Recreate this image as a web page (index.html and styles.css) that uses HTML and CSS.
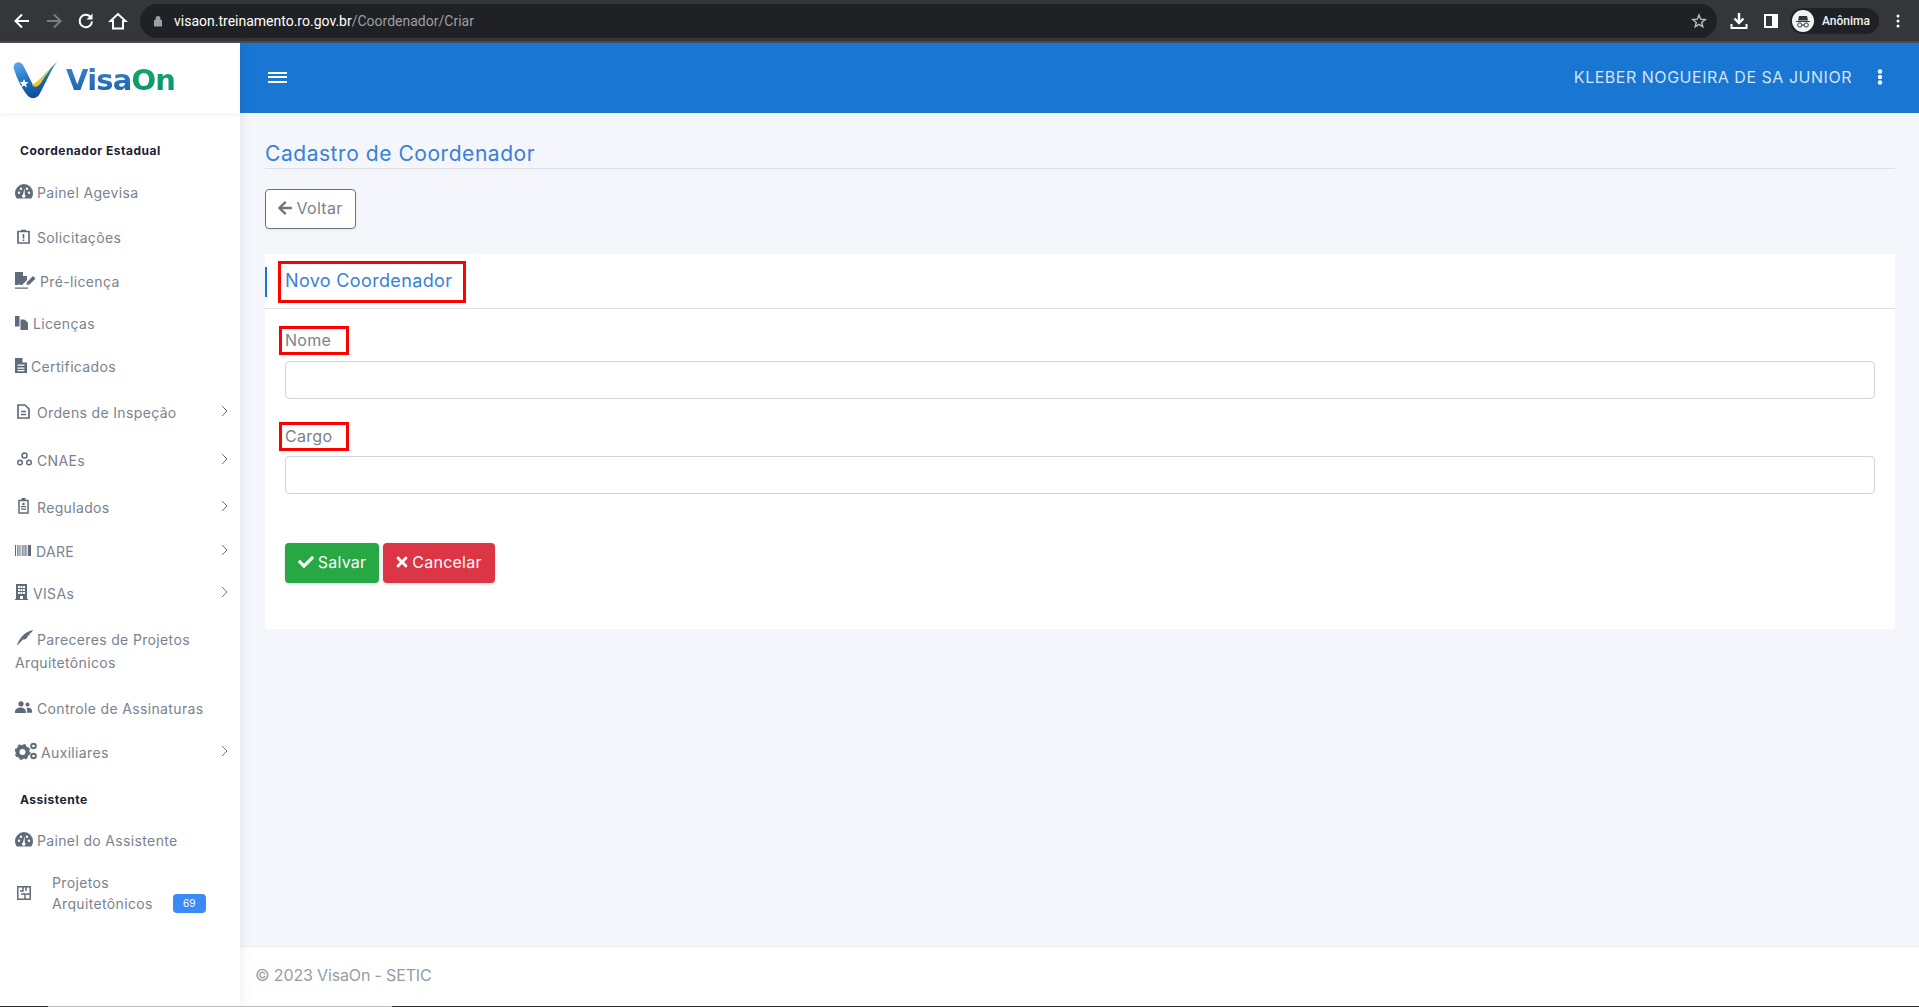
FILE: index.html
```html
<!DOCTYPE html>
<html lang="pt-BR">
<head>
<meta charset="utf-8">
<title>VisaOn</title>
<link rel="stylesheet" href="styles.css">
</head>
<body>
<div class="chrome">
  <svg class="cico" width="20" height="20" viewBox="0 0 20 20"><path d="M17 10H4M10 3.500 3.500 10l6.500 6.500" fill="none" stroke="#fff" stroke-width="2"/></svg>
  <svg class="cico" width="20" height="20" viewBox="0 0 20 20"><path d="M3 10h13M10 3.500l6.500 6.500-6.500 6.500" fill="none" stroke="#7b7c7f" stroke-width="2"/></svg>
  <svg class="cico" width="20" height="20" viewBox="0 0 20 20"><path d="M16 10.500A6.200 6.200 0 1 1 14.200 5.600" fill="none" stroke="#fff" stroke-width="2"/><path d="M16.500 2.500v6h-6z" fill="#fff"/></svg>
  <svg class="cico" width="20" height="20" viewBox="0 0 20 20"><path d="M10 3 2.500 10H5v7.500h10V10h2.500z" fill="none" stroke="#fff" stroke-width="2"/></svg>
  <div class="omni">
    <svg class="lock" width="10" height="12" viewBox="0 0 10 12"><path d="M2.500 5V3.400a2.500 2.500 0 0 1 5 0V5H9v6.500H1V5z" fill="#9aa0a6"/></svg>
    <span class="url">visaon.treinamento.ro.gov.br<span class="url-dim">/Coordenador/Criar</span></span>
    <svg class="star" width="16" height="16" viewBox="0 0 16 16"><path d="m8 2 1.700 4.200 4.500.3-3.500 2.900 1.100 4.400L8 11.400l-3.800 2.400 1.100-4.400-3.500-2.900 4.500-.3z" fill="none" stroke="#bdc1c6" stroke-width="1.400"/></svg>
  </div>
  <svg class="dl" width="18" height="18" viewBox="0 0 18 18"><path d="M9 1v9M4.500 6.500 9 11l4.500-4.500" fill="none" stroke="#fff" stroke-width="2.400"/><path d="M1.500 12v4h15v-4" fill="none" stroke="#fff" stroke-width="2"/></svg>
  <svg class="panel" width="14" height="14" viewBox="0 0 14 14"><path d="M0 0h14v14H0zM2 2v10h6V2z" fill="#fff" fill-rule="evenodd"/></svg>
  <div class="pill">
    <svg width="22" height="22" viewBox="0 0 22 22"><circle cx="11" cy="11" r="11" fill="#f1f3f4"/><path d="M4 11h14v1H4zM7 6h8l1 4.500H6z" fill="#35363a"/><circle cx="7.800" cy="15" r="2.100" fill="none" stroke="#35363a"/><circle cx="14.200" cy="15" r="2.100" fill="none" stroke="#35363a"/><path d="M9.800 15h2.400" stroke="#35363a"/></svg>
    <span>Anônima</span>
  </div>
  <svg class="cdots" width="4" height="14" viewBox="0 0 4 14"><circle cx="2" cy="2" r="1.500" fill="#fff"/><circle cx="2" cy="7" r="1.500" fill="#fff"/><circle cx="2" cy="12" r="1.500" fill="#fff"/></svg>
</div>

<div class="app">
  <aside class="sidebar">
    <div class="logo">
      <svg width="44" height="38" viewBox="0 0 44 38">
        <defs>
          <linearGradient id="vb" x1="0" y1="0" x2="0.5" y2="1"><stop offset="0" stop-color="#63aef0"/><stop offset="0.55" stop-color="#1f6fc0"/><stop offset="1" stop-color="#0d4a94"/></linearGradient>
          <linearGradient id="vy" x1="0" y1="1" x2="1" y2="0"><stop offset="0" stop-color="#f5c518"/><stop offset="0.7" stop-color="#d9d42c"/><stop offset="1" stop-color="#2fa36b"/></linearGradient>
        </defs>
        <path d="M1 8C-1 1 7-1 10 4l10 20c7-4 14-14 24-23-7 9-11 21-18 33-3 4-8 4-11 1C9 28 4 18 1 8z" fill="url(#vb)"/>
        <path d="M19 24c8-4 15-14 25-23-6 6-12 14-16 21-3 4-6 5-9 2z" fill="url(#vy)"/>
        <path d="m11 18 1.300 3 3.200.2-2.500 2 .9 3.200-2.900-1.800-2.800 1.800.8-3.200-2.500-2 3.300-.2z" fill="#fff"/>
      </svg>
      <span class="brand"><span class="brand-visa">Visa</span><span class="brand-on">On</span></span>
    </div>
    <nav class="nav">
      <div class="nav-head nav-head-first">Coordenador Estadual</div>
      <a class="mi h46"><span class="ico w22"><svg width="18" height="15" viewBox="0 0 18 15"><path d="M9 0a9 9 0 0 1 9 9c0 2-.6 4-1.700 5.500H1.700A9 9 0 0 1 0 9a9 9 0 0 1 9-9zM9.500 4 8 10.500a1.700 1.700 0 1 0 1.800.2zM4 7.500a1.200 1.200 0 1 0 0 2.400 1.200 1.200 0 0 0 0-2.400zm10 0a1.200 1.200 0 1 0 0 2.400 1.200 1.200 0 0 0 0-2.400zM6 3.500a1.200 1.200 0 1 0 0 2.400 1.200 1.200 0 0 0 0-2.400zm6 0a1.200 1.200 0 1 0 0 2.400 1.200 1.200 0 0 0 0-2.400z" fill="#5f6b7a" fill-rule="evenodd"/></svg></span>Painel Agevisa</a>
      <a class="mi h45"><span class="ico w22 pad2"><svg width="13" height="15" viewBox="0 0 13 15"><path d="M4 1.500h5M1 2.500h11v11.500H1z" fill="none" stroke="#5f6b7a" stroke-width="1.700"/><path d="M5.700 5h1.600v4.500H5.700zM5.700 10.500h1.600v1.500H5.700z" fill="#5f6b7a"/></svg></span>Solicitações</a>
      <a class="mi h43"><span class="ico w25"><svg width="21" height="17" viewBox="0 0 21 17"><path d="M0 0h8l4 4v4l-5 5H4l1.500-2-2.500 2H0zM8 0v4h4z" fill="#5f6b7a"/><path d="m12 10 6-6 2.500 2.500-6 6-3 .5zM0 15.500h13v1.300H0z" fill="#5f6b7a"/></svg></span>Pré-licença</a>
      <a class="mi h41"><span class="ico w18"><svg width="13" height="14" viewBox="0 0 13 14"><path d="M0 0h4.500v10.500H0zM5.500 3.500H9L13 7v7H5.500zM9.500 3.500 13 6.700H9.500z" fill="#5f6b7a"/></svg></span>Licenças</a>
      <a class="mi h44"><span class="ico w16"><svg width="12" height="15" viewBox="0 0 12 15"><path d="M0 0h7.500L12 4.500V15H0zM2.500 6.500v1.300h7V6.500zm0 3v1.300h7V9.500zm0 2.600v1.200h7v-1.200zM7.500 0v4.500H12z" fill="#5f6b7a" fill-rule="evenodd"/></svg></span>Certificados</a>
      <a class="mi h48"><span class="ico w22 pad2"><svg width="13" height="15" viewBox="0 0 13 15"><path d="M1 1h7l4 4v9H1z" fill="none" stroke="#5f6b7a" stroke-width="1.700"/><path d="M4 7.500h5M4 10.500h5" stroke="#5f6b7a" stroke-width="1.500"/></svg></span>Ordens de Inspeção<svg class="chev" width="7" height="12" viewBox="0 0 7 12"><path d="m1 1 5 5-5 5" fill="none" stroke="#6c757d"/></svg></a>
      <a class="mi h48"><span class="ico w22 pad2"><svg width="15" height="14" viewBox="0 0 15 14"><circle cx="7.500" cy="3.500" r="2.500" fill="none" stroke="#5f6b7a" stroke-width="1.500"/><circle cx="3" cy="10.500" r="2.300" fill="none" stroke="#5f6b7a" stroke-width="1.500"/><circle cx="12" cy="10.500" r="2.300" fill="none" stroke="#5f6b7a" stroke-width="1.500"/></svg></span>CNAEs<svg class="chev" width="7" height="12" viewBox="0 0 7 12"><path d="m1 1 5 5-5 5" fill="none" stroke="#6c757d"/></svg></a>
      <a class="mi h46"><span class="ico w22 pad3"><svg width="11" height="16" viewBox="0 0 11 16"><path d="M1 2.500h9V15H1z" fill="none" stroke="#5f6b7a" stroke-width="1.500"/><path d="M3.500 0h4v3h-4zM3 8h5v1.300H3zM3 10.500h5v1.300H3z" fill="#5f6b7a"/><circle cx="5.500" cy="6" r="1.300" fill="#5f6b7a"/></svg></span>Regulados<svg class="chev" width="7" height="12" viewBox="0 0 7 12"><path d="m1 1 5 5-5 5" fill="none" stroke="#6c757d"/></svg></a>
      <a class="mi h42"><span class="ico w21"><svg width="16" height="11" viewBox="0 0 16 11"><path d="M0 0h1v11H0zM2 0h.7v11H2zM3.500 0h1v11h-1zM5.500 0h.7v11h-.7zM7 0h.7v11H7zM8.500 0h1v11h-1zM10 0h.7v11H10zM11.500 0h.7v11h-.7zM13 0h3v11h-3z" fill="#5f6b7a"/></svg></span>DARE<svg class="chev" width="7" height="12" viewBox="0 0 7 12"><path d="m1 1 5 5-5 5" fill="none" stroke="#6c757d"/></svg></a>
      <a class="mi h42"><span class="ico w18"><svg width="13" height="16" viewBox="0 0 13 16"><path d="M1 0h11v15h1v1H0v-1h1zM3 2v2h2V2zm2.500 0v2h2V2zM8 2v2h2V2zM3 5v2h2V5zm2.500 0v2h2V5zM8 5v2h2V5zM3 8v2h2V8zm2.500 0v2h2V8zM8 8v2h2V8zM5 12v3h3v-3z" fill="#5f6b7a" fill-rule="evenodd"/></svg></span>VISAs<svg class="chev" width="7" height="12" viewBox="0 0 7 12"><path d="m1 1 5 5-5 5" fill="none" stroke="#6c757d"/></svg></a>
      <a class="mi-wrap"><span class="ico-in"><svg width="16" height="15" viewBox="0 0 16 15"><path d="M0 15C2 9 7 2 16 0c-1 2-2 3-4 4l1 .5-3 2 1 .5-3 2.500h-2L2 13.500 1 15z" fill="#5f6b7a"/></svg></span>Pareceres de Projetos Arquitetônicos</a>
      <a class="mi h46"><span class="ico w22"><svg width="17" height="12" viewBox="0 0 17 12"><circle cx="6" cy="2.800" r="2.600" fill="#5f6b7a"/><circle cx="12.500" cy="3.500" r="2" fill="#5f6b7a"/><path d="M0 11c0-6 11-6 11 0v1H0zM12 11.800h5V10c0-3-3-4-5.500-3 1 1.200.5 3 .5 4.800z" fill="#5f6b7a"/></svg></span>Controle de Assinaturas</a>
      <a class="mi h42"><span class="ico w26"><svg width="23" height="18" viewBox="0 0 23 18"><circle cx="7.500" cy="10" r="5" fill="none" stroke="#5f6b7a" stroke-width="4"/><circle cx="7.500" cy="10" r="6.500" fill="none" stroke="#5f6b7a" stroke-width="3" stroke-dasharray="2.500 2.600"/><circle cx="18.500" cy="4" r="2.300" fill="none" stroke="#5f6b7a" stroke-width="2"/><circle cx="18.500" cy="14" r="2.300" fill="none" stroke="#5f6b7a" stroke-width="2"/></svg></span>Auxiliares<svg class="chev" width="7" height="12" viewBox="0 0 7 12"><path d="m1 1 5 5-5 5" fill="none" stroke="#6c757d"/></svg></a>
      <div class="nav-head">Assistente</div>
      <a class="mi h42"><span class="ico w22"><svg width="18" height="15" viewBox="0 0 18 15"><path d="M9 0a9 9 0 0 1 9 9c0 2-.6 4-1.700 5.500H1.700A9 9 0 0 1 0 9a9 9 0 0 1 9-9zM9.500 4 8 10.500a1.700 1.700 0 1 0 1.800.2zM4 7.500a1.200 1.200 0 1 0 0 2.400 1.200 1.200 0 0 0 0-2.400zm10 0a1.200 1.200 0 1 0 0 2.400 1.200 1.200 0 0 0 0-2.400zM6 3.500a1.200 1.200 0 1 0 0 2.400 1.200 1.200 0 0 0 0-2.400zm6 0a1.200 1.200 0 1 0 0 2.400 1.200 1.200 0 0 0 0-2.400z" fill="#5f6b7a" fill-rule="evenodd"/></svg></span>Painel do Assistente</a>
      <a class="mi-proj">
        <span class="proj-ico"><svg width="14" height="14" viewBox="0 0 14 14"><path d="M.8.800h12.400v12.400H.8zM6 1v4H3M4 8h4v5M9 8h4M9 5V1" fill="none" stroke="#5f6b7a" stroke-width="1.500"/></svg></span>
        <span class="proj-text">Projetos<br>Arquitetônicos</span>
        <span class="badge">69</span>
      </a>
    </nav>
  </aside>

  <div class="main">
    <header class="topbar">
      <span class="burger"><i></i><i></i><i></i></span>
      <span class="user">KLEBER NOGUEIRA DE SA JUNIOR</span>
      <svg class="tdots" width="6" height="16" viewBox="0 0 6 16"><circle cx="3" cy="2.500" r="2.200" fill="#fff"/><circle cx="3" cy="8" r="2.200" fill="#fff"/><circle cx="3" cy="13.500" r="2.200" fill="#fff"/></svg>
    </header>
    <main class="content">
      <h1 class="page-title">Cadastro de Coordenador</h1>
      <button class="btn-back" type="button"><svg width="14" height="16" viewBox="0 0 448 512"><path d="M257.500 445.100l-22.200 22.200c-9.400 9.400-24.600 9.400-33.900 0L7 273c-9.400-9.400-9.400-24.600 0-33.900L201.400 44.700c9.400-9.400 24.600-9.400 33.900 0l22.200 22.200c9.500 9.500 9.300 25-.4 34.300L136.600 216H424c13.300 0 24 10.700 24 24v32c0 13.300-10.700 24-24 24H136.600l120.500 114.800c9.800 9.300 10 24.800.4 34.300z" fill="#6c757d"/></svg>Voltar</button>
      <section class="card">
        <div class="card-head">
          <span class="accent"></span>
          <h2 class="card-title">Novo Coordenador</h2>
        </div>
        <form class="card-body">
          <label class="lbl lbl-a">Nome</label>
          <input class="field field-a" type="text">
          <label class="lbl lbl-b">Cargo</label>
          <input class="field" type="text">
          <div class="actions">
            <button class="btn btn-ok" type="button"><svg width="16" height="16" viewBox="0 0 512 512"><path d="M173.898 439.404l-166.400-166.400c-9.997-9.997-9.997-26.206 0-36.204l36.203-36.204c9.997-9.998 26.207-9.998 36.204 0L192 312.690 432.095 72.596c9.997-9.997 26.207-9.997 36.204 0l36.203 36.204c9.997 9.997 9.997 26.206 0 36.204l-294.400 294.401c-9.998 9.997-26.207 9.997-36.204-.001z" fill="#fff"/></svg>Salvar</button>
            <button class="btn btn-no" type="button"><svg width="12" height="16" viewBox="0 0 352 512"><path d="M242.720 256l100.070-100.070c12.280-12.280 12.280-32.190 0-44.480l-22.240-22.240c-12.280-12.280-32.190-12.280-44.480 0L176 189.280 75.930 89.210c-12.280-12.280-32.190-12.280-44.480 0L9.210 111.450c-12.280 12.280-12.280 32.190 0 44.480L109.280 256 9.210 356.070c-12.280 12.280-12.280 32.190 0 44.480l22.240 22.240c12.280 12.280 32.200 12.280 44.480 0L176 322.720l100.070 100.070c12.280 12.280 32.200 12.280 44.480 0l22.240-22.240c12.280-12.280 12.280-32.190 0-44.480L242.720 256z" fill="#fff"/></svg>Cancelar</button>
          </div>
        </form>
      </section>
    </main>
    <footer class="footer">© 2023 VisaOn - SETIC</footer>
  </div>
</div>
<div class="strip"><i class="s1"></i><i class="s2"></i><i class="s3"></i></div>
</body>
</html>
```

FILE: styles.css
```css
* { box-sizing: border-box; }
html, body { margin: 0; height: 100%; overflow: hidden; }
body {
  display: flex;
  flex-direction: column;
  height: 1007px;
  font-family: Inter, "Liberation Sans", sans-serif;
  background: #f4f6fb;
}
.chrome {
  flex: 0 0 43px;
  display: flex;
  align-items: center;
  background: #35363a;
  border-bottom: 2px solid #4b4c50;
  padding: 0 0 0 12px;
}
.cico { margin-right: 12px; flex: none; }
.omni {
  width: 1577px;
  height: 34px;
  border-radius: 17px;
  background: #202124;
  display: flex;
  align-items: center;
  padding: 0 10px 0 13px;
}
.lock { flex: none; }
.url {
  margin-left: 11px;
  font: 14px Roboto, sans-serif;
  color: #fff;
  flex: 1;
}
.url-dim { color: #9aa0a6; }
.dl { margin-left: 13px; flex: none; }
.panel { margin-left: 16px; flex: none; }
.pill {
  margin-left: 12px;
  width: 89px;
  height: 26px;
  border-radius: 13px;
  background: #202124;
  display: flex;
  align-items: center;
  padding-left: 2px;
  gap: 8px;
  font: 500 12px Roboto, sans-serif;
  color: #f1f3f4;
  flex: none;
}
.cdots { margin-left: 17px; flex: none; }

.app { flex: 1; display: flex; min-height: 0; }
.sidebar {
  flex: 0 0 240px;
  background: #fff;
  box-shadow: 0 0 12px rgba(60, 70, 90, .12);
  position: relative;
  z-index: 1;
}
.logo {
  height: 70px;
  display: flex;
  align-items: center;
  padding: 4px 0 0 13px;
  box-shadow: 0 2px 6px rgba(60, 70, 90, .06);
}
.brand {
  margin-left: 9px;
  font: 700 29px "DejaVu Sans", sans-serif;
  letter-spacing: -.8px;
}
.brand-visa, .brand-on {
  -webkit-background-clip: text;
  background-clip: text;
  color: transparent;
}
.brand-visa { background-image: linear-gradient(#3c86cf, #1b5dab); }
.brand-on { background-image: linear-gradient(#17a874, #0a8f68); }
.nav { display: flex; flex-direction: column; padding-top: 18px; }
.nav-head {
  height: 40px;
  margin-top: 6px;
  padding-left: 20px;
  display: flex;
  align-items: center;
  font-size: 12px;
  font-weight: 700;
  letter-spacing: .5px;
  color: #1a2233;
}
.nav-head-first { height: 38px; margin-top: 0; }
.mi, .mi-wrap, .mi-proj {
  font-size: 14px;
  letter-spacing: .35px;
  color: #7a828e;
}
.mi { display: flex; align-items: center; padding: 0 12px 0 15px; }
.h41 { height: 41px; }
.h42 { height: 42px; }
.h43 { height: 43px; }
.h44 { height: 44px; }
.h45 { height: 45px; }
.h46 { height: 46px; }
.h48 { height: 48px; }
.ico { display: flex; align-items: center; flex: none; margin-top: -2px; }
.pad2 { padding-left: 2px; }
.pad3 { padding-left: 3px; }
.w16 { width: 16px; }
.w18 { width: 18px; }
.w21 { width: 21px; }
.w22 { width: 22px; }
.w25 { width: 25px; }
.w26 { width: 26px; }
.chev { margin-left: auto; flex: none; margin-top: -3px; }
.mi-wrap {
  display: block;
  padding: 14px 20px 11px 15px;
  line-height: 23px;
}
.ico-in { display: inline-block; width: 22px; padding-left: 2px; }
.mi-proj {
  height: 63px;
  display: flex;
  align-items: center;
  padding-left: 17px;
  line-height: 21px;
}
.proj-ico { width: 35px; display: flex; flex: none; }
.proj-text { flex: none; }
.badge {
  align-self: flex-end;
  margin: 0 0 11px 20px;
  width: 33px;
  height: 19px;
  border-radius: 4px;
  background: #3b8bf6;
  color: #fff;
  font-size: 10px;
  letter-spacing: 0;
  line-height: 19px;
  text-align: center;
}

.main { flex: 1; min-width: 0; display: flex; flex-direction: column; }
.topbar {
  flex: 0 0 70px;
  background: #1976d2;
  display: flex;
  align-items: center;
  padding: 0 36px 2px 28px;
}
.burger { display: flex; flex-direction: column; gap: 2.500px; width: 19px; }
.burger i { display: block; height: 2px; background: #fff; }
.user {
  margin-left: auto;
  font-size: 16px;
  letter-spacing: .52px;
  color: rgba(255, 255, 255, .82);
}
.tdots { margin-left: 25px; flex: none; }

.content {
  flex: 1;
  padding: 0 24px 0 25px;
  display: flex;
  flex-direction: column;
  align-items: flex-start;
}
.page-title {
  align-self: stretch;
  margin: 0;
  height: 56px;
  padding-top: 27px;
  border-bottom: 1px solid #dcdfe4;
  font-size: 21px;
  line-height: 28px;
  font-weight: 400;
  letter-spacing: .55px;
  color: #3a80d8;
}
.btn-back {
  margin-top: 20px;
  width: 91px;
  height: 40px;
  display: flex;
  align-items: center;
  justify-content: center;
  gap: 4px;
  padding: 0 0 2px;
  background: #fff;
  border: 1px solid #6c757d;
  border-radius: 4px;
  box-shadow: 0 1px 2px rgba(0, 0, 0, .08);
  font: 400 16px Inter, sans-serif;
  letter-spacing: .3px;
  color: #7a828e;
}
.card { align-self: stretch; margin-top: 25px; height: 375px; background: #fff; }
.card-head {
  height: 55px;
  border-bottom: 1px solid #dfe1e5;
  display: flex;
  align-items: center;
  padding-top: 2px;
}
.accent { width: 2px; height: 30px; background: #1976d2; margin-right: 11px; flex: none; }
.card-title {
  margin: 0;
  width: 188px;
  height: 42px;
  border: 3px solid #f00;
  padding-left: 4px;
  font-size: 18px;
  line-height: 34px;
  font-weight: 400;
  letter-spacing: .35px;
  color: #3a80d8;
}
.card-body { display: block; padding: 17px 20px 0; }
.lbl {
  display: block;
  margin-left: -6px;
  width: 70px;
  height: 29px;
  border: 3px solid #f00;
  padding-left: 3px;
  font-size: 16px;
  line-height: 23px;
  letter-spacing: .3px;
  color: #7a828e;
}
.lbl-a { margin-bottom: 6px; }
.lbl-b { margin-bottom: 5px; }
.field {
  display: block;
  width: 100%;
  height: 38px;
  border: 1px solid #ced4da;
  border-radius: 4px;
  background: #fff;
}
.field-a { margin-bottom: 23px; }
.actions { margin-top: 49px; display: flex; gap: 4px; }
.btn {
  height: 40px;
  display: flex;
  align-items: center;
  justify-content: center;
  gap: 4px;
  padding: 0 0 2px;
  border: 0;
  border-radius: 4px;
  box-shadow: 0 1px 3px rgba(0, 0, 0, .15);
  color: #fff;
  font: 400 16px Inter, sans-serif;
  letter-spacing: .25px;
}
.btn-ok { width: 94px; background: #28a745; }
.btn-no { width: 112px; background: #dc3545; }
.footer {
  flex: 0 0 60px;
  background: #fff;
  border-top: 1px solid #ebedf0;
  padding: 17px 0 0 15px;
  font-size: 16px;
  line-height: 22px;
  letter-spacing: -.15px;
  color: #969ca6;
}
.strip { flex: 0 0 1px; display: flex; position: relative; z-index: 2; }
.s1 { width: 48px; background: #1f2e33; }
.s2 { width: 344px; background: #bcbcbc; }
.s3 { flex: 1; background: #1f2e33; }
```
